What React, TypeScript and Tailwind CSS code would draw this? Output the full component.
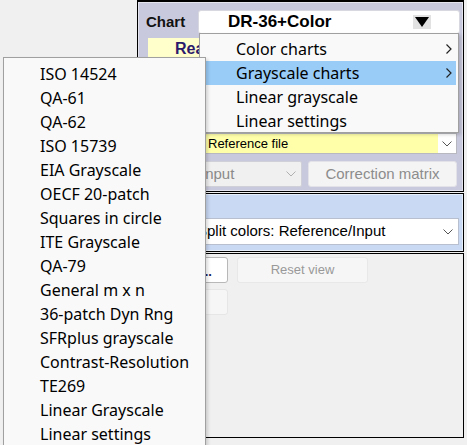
import React from 'react';

const chartGroups = ['Color charts', 'Grayscale charts', 'Linear grayscale', 'Linear settings'];

const grayscaleCharts = [
  'ISO 14524',
  'QA-61',
  'QA-62',
  'ISO 15739',
  'EIA Grayscale',
  'OECF 20-patch',
  'Squares in circle',
  'ITE Grayscale',
  'QA-79',
  'General m x n',
  '36-patch Dyn Rng',
  'SFRplus grayscale',
  'Contrast-Resolution',
  'TE269',
  'Linear Grayscale',
  'Linear settings',
];

const Chevron: React.FC<{ color?: string }> = ({ color = '#555' }) => (
  <svg width="10" height="6" viewBox="0 0 10 6" fill="none">
    <path d="M0.5 0.5 L5 5 L9.5 0.5" stroke={color} strokeWidth="1" />
  </svg>
);

const SubArrow: React.FC = () => (
  <svg width="6" height="10" viewBox="0 0 6 10" fill="none">
    <path d="M0.5 0.5 L5 5 L0.5 9.5" stroke="#222" strokeWidth="1.2" />
  </svg>
);

const App: React.FC = () => {
  const menuFont = { fontFamily: '"Noto Sans", "Open Sans", sans-serif' };

  return (
    <div
      className="relative w-[467px] h-[445px] overflow-hidden bg-[#f0f0f0] flex"
      style={{ fontFamily: '"Liberation Sans", Arial, sans-serif' }}
    >
      <div className="w-[137px] shrink-0" />

      <div className="w-[327px] flex flex-col">
        {/* Chart panel */}
        <div className="h-[192px] border border-t-2 border-black bg-[#c9c9dd] flex flex-col">
          <div className="h-full border border-[#e4e4ee] flex flex-col pl-[7px] pr-[2px]">
            <div className="flex items-center mt-[7px] h-[24px]">
              <span className="w-[52px] text-[15px] font-bold text-[#111]">Chart</span>
              <div className="flex-1 h-[24px] bg-white rounded-[3px] border border-[#d8d8e0] flex items-center">
                <span className="ml-[29px] text-[17px] font-bold text-black">DR-36+Color</span>
                <div className="ml-auto mr-[28px] w-[18px] h-[14px] bg-[#e2e2e2] flex items-center justify-center">
                  <svg width="14" height="10" viewBox="0 0 14 10">
                    <path d="M0 0 H14 L7 10 Z" fill="#000" />
                  </svg>
                </div>
              </div>
            </div>

            <div className="mt-[4px] mr-[1px] ml-[2px] h-[22px] bg-[#ffffcc] flex items-center">
              <span className="ml-[27px] text-[16px] font-bold text-[#2b1a6b]">Read</span>
            </div>

            <div className="h-[73px]" />

            <div className="ml-[40px] mr-[3px] h-[21px] border border-[#b8b8c0] bg-white flex items-center">
              <div className="flex-1 h-full bg-[#ffffaa] flex items-center">
                <span className="ml-[21px] text-[13px] text-black">Reference file</span>
              </div>
              <div className="w-[18px] flex justify-center">
                <Chevron />
              </div>
            </div>

            <div className="flex mt-[7px] h-[26px]">
              <div className="ml-[40px] w-[116px] border border-[#d0d0d8] rounded-[2px] bg-[#f0f0f0] flex items-center">
                <span className="ml-[14px] text-[15px] text-[#8a8a8a]">Input</span>
                <div className="ml-auto mr-[5px]">
                  <Chevron color="#b0b0b0" />
                </div>
              </div>
              <div className="ml-[6px] w-[149px] rounded-[3px] border border-[#e2e2e8] bg-[#f4f4f4] flex items-center justify-center">
                <span className="text-[15px] text-[#8c8c8c]">Correction matrix</span>
              </div>
            </div>
          </div>
        </div>

        {/* Display panel */}
        <div className="mt-[1px] h-[59px] border border-black bg-[#c9d9f3] flex flex-col">
          <div className="h-full border border-[#e6eefa] flex flex-col">
            <div className="mt-[23px] ml-[51px] mr-[3px] h-[27px] bg-white border border-[#b8c0d0] flex items-center">
              <span className="ml-[6px] text-[15px] text-black">Split colors: Reference/Input</span>
              <div className="ml-auto mr-[5px]">
                <Chevron />
              </div>
            </div>
          </div>
        </div>

        {/* View area */}
        <div className="mt-[1px] h-[185px] border border-black bg-[#f0f0f0] flex flex-col pt-[3px]">
          <div className="flex ml-[47px] h-[26px]">
            <div className="w-[43px] rounded-[3px] border border-[#b8b8b8] bg-white flex items-end justify-center pb-[4px]">
              <span className="text-[13px] font-bold leading-none text-[#1a1a5a]">...</span>
            </div>
            <div className="ml-[9px] w-[131px] rounded-[3px] border border-[#e8e8e8] bg-[#f6f6f6] flex items-center justify-center">
              <span className="text-[13px] text-[#999]">Reset view</span>
            </div>
          </div>
          <div className="mt-[6px] ml-[47px] w-[43px] h-[26px] rounded-[3px] border border-[#e6e6e6] bg-[#f6f6f6]" />
        </div>
      </div>

      {/* Chart menu */}
      <div
        className="absolute left-[199px] top-[33px] w-[260px] h-[100px] bg-[#f9f9f9] border border-[#a0a0a0] pt-[3px] pr-[2px] shadow-[2px_2px_3px_rgba(0,0,0,0.15)]"
        style={menuFont}
      >
        {chartGroups.map((item) => (
          <div
            key={item}
            className={`h-[24px] flex items-center pl-[36px] pr-[4px] text-[16px] text-black ${
              item === 'Grayscale charts' ? 'bg-[#99ccf7]' : ''
            }`}
          >
            <span>{item}</span>
            {(item === 'Color charts' || item === 'Grayscale charts') && (
              <span className="ml-auto">
                <SubArrow />
              </span>
            )}
          </div>
        ))}
      </div>

      {/* Grayscale submenu */}
      <div
        className="absolute left-[3px] top-[57px] w-[203px] h-[400px] bg-[#f9f9f9] border border-[#a0a0a0] pt-[4px] shadow-[2px_2px_3px_rgba(0,0,0,0.15)]"
        style={menuFont}
      >
        {grayscaleCharts.map((item) => (
          <div key={item} className="h-[24px] flex items-center pl-[36px] text-[16px] text-black">
            {item}
          </div>
        ))}
      </div>
    </div>
  );
};

export default App;
